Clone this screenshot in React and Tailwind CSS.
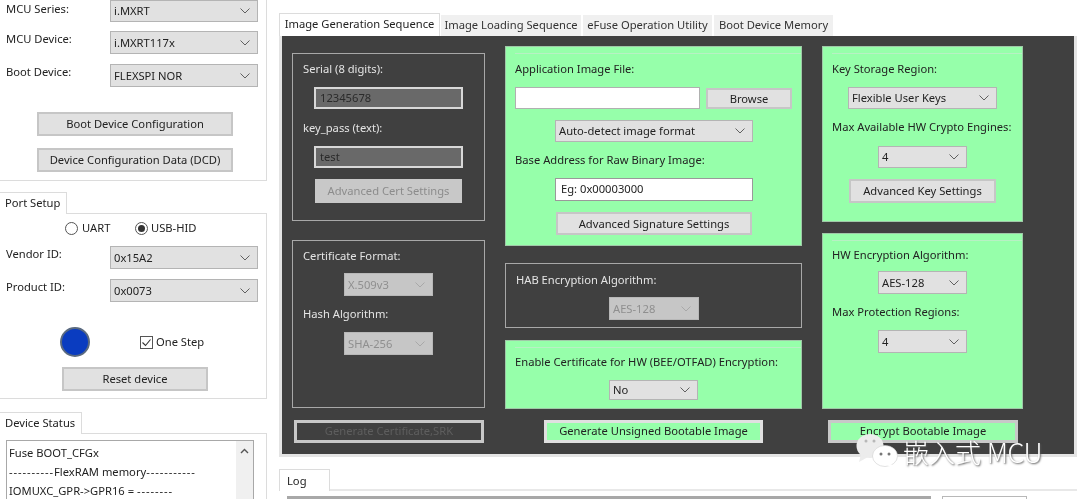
const font = '[font-family:"Noto_Sans","Open_Sans",sans-serif]';

function Chevron({ color = "#606060" }) {
  return (
    <svg width="10" height="6" viewBox="0 0 10 6" fill="none" stroke={color} strokeWidth="1">
      <path d="M0.5 0.5 L5 5 L9.5 0.5" />
    </svg>
  );
}

function Select({ value, className = "", disabled = false }) {
  return (
    <div
      className={`flex items-center justify-between pl-[3px] pr-[7px] border leading-none ${
        disabled ? "bg-[#c6c6c6] border-[#b8b8b8] text-[#8f8f8f]" : "bg-[#e1e1e1] border-[#b4b4b4] text-[#222]"
      } ${className}`}
    >
      <span>{value}</span>
      <Chevron color={disabled ? "#a8a8a8" : "#606060"} />
    </div>
  );
}

function Button({ children, className = "", disabled = false }) {
  return (
    <div
      className={`flex items-center justify-center border-2 leading-none ${
        disabled ? "bg-[#c8c8c8] border-[#c8c8c8] text-[#8c8c8c]" : "bg-[#e1e1e1] border-[#c6c6c6] text-[#222]"
      } ${className}`}
    >
      {children}
    </div>
  );
}

function Label({ children, className = "" }) {
  return <div className={`h-[18px] leading-[18px] whitespace-nowrap ${className}`}>{children}</div>;
}

function GreenPanel({ className = "", children }) {
  return (
    <div className={`bg-[#96ffaa] border border-[#a0c8a8] text-[#222] ${className}`}>
      <div className="mt-[6px] border-t border-[#b8f0c4]" />
      {children}
    </div>
  );
}

function DarkGroup({ className = "", children }) {
  return <div className={`border border-[#a8a8a8] text-[#e4e4e4] ${className}`}>{children}</div>;
}

function SideRow({ label, value, labelClass = "", className = "" }) {
  return (
    <div className={`flex ${className}`}>
      <div className={`w-[110px] pl-[6px] ${labelClass}`}>
        <Label>{label}</Label>
      </div>
      <Select value={value} className="w-[148px] h-[23px]" />
    </div>
  );
}

function TopTab({ children, active = false, className = "" }) {
  return (
    <div
      className={`flex items-center justify-center whitespace-nowrap ${
        active ? "h-[23px] bg-white border border-b-0 border-[#dcdcdc] text-[#222]" : "h-[21px] bg-[#f0f0f0] text-[#333]"
      } ${className}`}
    >
      {children}
    </div>
  );
}

function Sidebar() {
  return (
    <aside className="w-[267px] shrink-0 flex flex-col">
      <section className="h-[181px] border-r border-b border-[#dcdcdc] shrink-0">
        <div className="flex">
          <div className="w-[110px] pl-[6px]">
            <Label>MCU Series:</Label>
          </div>
          <Select value="i.MXRT" className="w-[148px] h-[22px]" />
        </div>
        <SideRow label="MCU Device:" value="i.MXRT117x" className="mt-[9px]" labelClass="-mt-[1px]" />
        <SideRow label="Boot Device:" value="FLEXSPI NOR" className="mt-[10px]" labelClass="-mt-[1px]" />
        <Button className="w-[196px] h-[24px] ml-[37px] mt-[25px]">Boot Device Configuration</Button>
        <Button className="w-[196px] h-[24px] ml-[37px] mt-[12px]">Device Configuration Data (DCD)</Button>
      </section>

      <div className="mt-[11px] flex shrink-0">
        <div className="w-[67px] h-[22px] border-t border-r border-[#dcdcdc] pl-[5px] leading-[20px]">Port Setup</div>
        <div className="flex-1 border-b border-[#dcdcdc]" />
      </div>
      <section className="h-[185px] border-r border-b border-[#dcdcdc] shrink-0">
        <div className="flex items-center h-[14px] mt-[7px] ml-[65px]">
          <span className="w-[13px] h-[13px] rounded-full border border-[#555] bg-white" />
          <span className="ml-[4px] w-[28px]">UART</span>
          <span className="ml-[25px] w-[13px] h-[13px] rounded-full border border-[#555] bg-white flex items-center justify-center">
            <span className="w-[7px] h-[7px] rounded-full bg-[#333]" />
          </span>
          <span className="ml-[3px]">USB-HID</span>
        </div>
        <SideRow label="Vendor ID:" value="0x15A2" className="mt-[11px]" labelClass="-mt-[1px]" />
        <SideRow label="Product ID:" value="0x0073" className="mt-[10px]" labelClass="-mt-[1px]" />
        <div className="flex items-center h-[32px] mt-[24px]">
          <span className="ml-[60px] w-[30px] h-[30px] rounded-full bg-[#0a3cc0] border-2 border-[#5a6a80]" />
          <span className="ml-[50px] w-[13px] h-[13px] border border-[#555] bg-white flex items-center justify-center">
            <svg width="11" height="11" viewBox="0 0 11 11" fill="none" stroke="#333" strokeWidth="1.1">
              <path d="M1.5 5.5 L4.5 8.5 L9.5 2.5" />
            </svg>
          </span>
          <span className="ml-[3px]">One Step</span>
        </div>
        <Button className="w-[146px] h-[24px] ml-[62px] mt-[9px]">Reset device</Button>
      </section>

      <div className="mt-[13px] flex shrink-0">
        <div className="w-[82px] h-[22px] border-t border-r border-[#dcdcdc] pl-[5px] leading-[20px]">Device Status</div>
        <div className="flex-1 border-b border-[#dcdcdc]" />
      </div>
      <section className="flex-1 border-r border-[#dcdcdc] pt-[6px] pl-[6px] overflow-hidden">
        <div className="w-[248px] h-[80px] border border-[#a8a8a8] flex">
          <div className="flex-1 pl-[2px] pt-[2px] whitespace-nowrap leading-[19px] text-[#222] overflow-hidden">
            <div>Fuse BOOT_CFGx</div>
            <div>
              <span className="tracking-[0.9px]">----------</span>FlexRAM memory<span className="tracking-[0.9px]">-----------</span>
            </div>
            <div>
              IOMUXC_GPR-&gt;GPR16 = <span className="tracking-[0.9px]">--------</span>
            </div>
          </div>
          <div className="w-[17px] bg-[#f0f0f0] flex justify-center pt-[7px]">
            <svg width="9" height="6" viewBox="0 0 9 6" fill="none" stroke="#555" strokeWidth="1.4">
              <path d="M1 5 L4.5 1.5 L8 5" />
            </svg>
          </div>
        </div>
      </section>
    </aside>
  );
}

function Workspace() {
  return (
    <main className="flex-1 pl-[12px] pr-[3px] pt-[13px] flex flex-col min-w-0">
      <div className="flex items-end h-[23px] shrink-0">
        <TopTab active className="w-[161px] pb-[2px]">Image Generation Sequence</TopTab>
        <TopTab className="w-[140px] ml-[1px]">Image Loading Sequence</TopTab>
        <TopTab className="w-[129px] ml-[2px]">eFuse Operation Utility</TopTab>
        <TopTab className="w-[119px] ml-[2px]">Boot Device Memory</TopTab>
      </div>
      <div className="h-[421px] shrink-0 border-[3px] border-t-0 border-[#e4e4e4] bg-[#404040] flex pl-[10px] pt-[10px]">
        <div className="w-[193px] pt-[7px] shrink-0">
          <DarkGroup className="h-[168px] pl-[10px]">
            <Label className="mt-[6px]">Serial (8 digits):</Label>
            <div className="ml-[11px] mt-[9px] w-[149px] h-[22px] border-2 border-[#d8d8d8] bg-[#696969] text-[#2a2a2a] pl-[4px] leading-[18px]">12345678</div>
            <Label className="mt-[10px]">key_pass (text):</Label>
            <div className="ml-[11px] mt-[9px] w-[149px] h-[22px] border-2 border-[#d8d8d8] bg-[#696969] text-[#2a2a2a] pl-[4px] leading-[18px]">test</div>
            <Button disabled className="ml-[12px] mt-[11px] w-[147px] h-[24px]">Advanced Cert Settings</Button>
          </DarkGroup>
          <DarkGroup className="h-[168px] mt-[19px] pl-[10px]">
            <Label className="mt-[6px]">Certificate Format:</Label>
            <Select disabled value="X.509v3" className="ml-[41px] mt-[8px] w-[89px] h-[23px]" />
            <Label className="mt-[9px]">Hash Algorithm:</Label>
            <Select disabled value="SHA-256" className="ml-[41px] mt-[9px] w-[89px] h-[23px]" />
          </DarkGroup>
          <div className="mt-[12px] ml-[2px] w-[190px] h-[23px] border-[3px] border-[#c8c8c8] bg-[#404040] text-[#5e5e5e] flex items-center justify-center">
            Generate Certificate,SRK
          </div>
        </div>

        <div className="w-[297px] ml-[20px] shrink-0">
          <GreenPanel className="h-[200px] pl-[9px]">
            <Label className="mt-[6px]">Application Image File:</Label>
            <div className="flex mt-[9px]">
              <div className="w-[185px] h-[22px] bg-white border border-[#b0b0b0]" />
              <Button className="w-[86px] h-[21px] ml-[6px] mt-[1px]">Browse</Button>
            </div>
            <Select value="Auto-detect image format" className="ml-[40px] mt-[11px] w-[198px] h-[22px]" />
            <Label className="mt-[9px]">Base Address for Raw Binary Image:</Label>
            <div className="ml-[40px] mt-[9px] w-[198px] h-[23px] bg-white border border-[#9a9a9a] pl-[5px] leading-[20px] text-[#222]">Eg: 0x00003000</div>
            <Button className="ml-[41px] mt-[11px] w-[196px] h-[23px]">Advanced Signature Settings</Button>
          </GreenPanel>
          <DarkGroup className="h-[65px] mt-[17px] pl-[10px]">
            <Label className="mt-[7px]">HAB Encryption Algorithm:</Label>
            <Select disabled value="AES-128" className="ml-[93px] mt-[8px] w-[90px] h-[23px]" />
          </DarkGroup>
          <GreenPanel className="h-[69px] mt-[12px] pl-[9px]">
            <Label className="mt-[5px]">Enable Certificate for HW (BEE/OTFAD) Encryption:</Label>
            <Select value="No" className="ml-[94px] mt-[9px] w-[89px] h-[20px]" />
          </GreenPanel>
          <div className="mt-[11px] ml-[39px] w-[219px] h-[23px] border-[3px] border-[#e0e0e0] bg-[#96ffaa] text-[#222] flex items-center justify-center">
            Generate Unsigned Bootable Image
          </div>
        </div>

        <div className="w-[201px] ml-[20px] shrink-0">
          <GreenPanel className="h-[176px] pl-[9px]">
            <Label className="mt-[6px]">Key Storage Region:</Label>
            <Select value="Flexible User Keys" className="ml-[16px] mt-[9px] w-[149px] h-[22px]" />
            <Label className="mt-[9px]">Max Available HW Crypto Engines:</Label>
            <Select value="4" className="ml-[46px] mt-[10px] w-[89px] h-[22px]" />
            <Button className="ml-[17px] mt-[11px] w-[147px] h-[24px]">Advanced Key Settings</Button>
          </GreenPanel>
          <GreenPanel className="h-[176px] mt-[11px] pl-[9px]">
            <Label className="mt-[5px]">HW Encryption Algorithm:</Label>
            <Select value="AES-128" className="ml-[46px] mt-[7px] w-[89px] h-[23px]" />
            <Label className="mt-[9px]">Max Protection Regions:</Label>
            <Select value="4" className="ml-[46px] mt-[9px] w-[89px] h-[23px]" />
          </GreenPanel>
          <div className="mt-[11px] ml-[6px] w-[190px] h-[23px] border-[3px] border-[#c8c8c8] bg-[#96ffaa] text-[#222] flex items-center justify-center">
            Encrypt Bootable Image
          </div>
        </div>
      </div>

      <div className="mt-[12px] flex shrink-0">
        <div className="w-[51px] h-[22px] border-t border-x border-[#dcdcdc] pl-[7px] leading-[22px]">Log</div>
        <div className="flex-1 border-b-2 border-[#e8e8e8]" />
      </div>
      <div className="flex mt-[5px] ml-[8px] shrink-0">
        <div className="w-[644px] h-[3px] bg-[#a8a8a8]" />
        <div className="w-[85px] h-[3px] ml-[11px] border-t border-x border-[#b8b8b8]" />
      </div>
    </main>
  );
}

function Watermark() {
  return (
    <div className="absolute left-[856px] top-[433px] flex items-start text-white">
      <svg width="42" height="36" viewBox="0 0 42 36">
        <ellipse cx="14" cy="13" rx="13.5" ry="12" fill="#ececec" />
        <path d="M5 21 L3 29 L12 24 Z" fill="#ececec" />
        <ellipse cx="29" cy="23" rx="12.5" ry="10.5" fill="#ffffff" stroke="#cfcfcf" strokeWidth="0.6" />
        <path d="M35 31 L39 35 L31 33 Z" fill="#ffffff" />
        <circle cx="10" cy="8" r="1.5" fill="#b8b8b8" />
        <circle cx="18" cy="8" r="1.5" fill="#b8b8b8" />
        <circle cx="25" cy="21" r="1.5" fill="#777" />
        <circle cx="33" cy="21" r="1.5" fill="#777" />
      </svg>
      <span className={`ml-[5px] mt-[6px] text-[26px] leading-[26px] whitespace-nowrap font-light [font-family:"Noto_Sans_CJK_SC","Noto_Sans",sans-serif] [text-shadow:1px_1px_2px_#555]`}>
        嵌入式 <span className="text-[27px] tracking-[-0.5px]">MCU</span>
      </span>
    </div>
  );
}

export default function App() {
  return (
    <div className={`relative w-[1080px] h-[499px] overflow-hidden bg-white flex text-[11.2px] text-[#222] blur-[0.4px] ${font}`}>
      <Sidebar />
      <Workspace />
      <Watermark />
    </div>
  );
}
